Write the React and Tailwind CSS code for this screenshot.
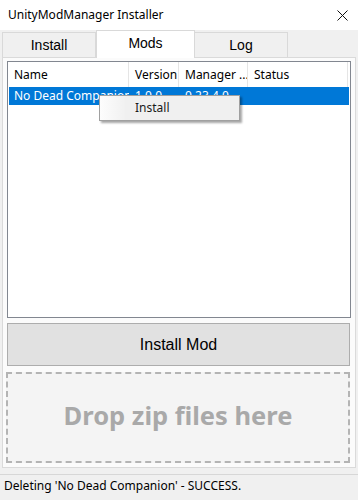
export default function App() {
  const ui = { fontFamily: '"Noto Sans", "Noto Sans CJK KR", sans-serif' }
  const arial = { fontFamily: '"Liberation Sans", Arial, sans-serif' }

  return (
    <div className="w-[358px] h-[500px] bg-[#f0f0f0] flex flex-col overflow-hidden text-black" style={ui}>
      {/* title bar */}
      <div className="h-[30px] bg-white flex items-center justify-between pl-2 pr-[10px] shrink-0">
        <span className="text-[12px] leading-none">UnityModManager Installer</span>
        <svg width="11" height="11" viewBox="0 0 11 11">
          <path d="M0.5 0.5 L10.5 10.5 M10.5 0.5 L0.5 10.5" stroke="#111" strokeWidth="1" />
        </svg>
      </div>

      {/* tabs */}
      <div className="flex items-end pl-[2px] h-[27px] shrink-0 relative z-10" style={arial}>
        <div className="w-[94px] h-[25px] border border-[#d9d9d9] border-b-0 bg-[#f0f0f0] flex items-center justify-center text-[14px]">Install</div>
        <div className="w-[99px] h-[28px] -mb-[1px] border border-[#d9d9d9] border-b-0 bg-white flex items-center justify-center text-[14px] pb-[3px]">Mods</div>
        <div className="w-[93px] h-[25px] border border-[#d9d9d9] border-b-0 border-l-0 bg-[#f0f0f0] flex items-center justify-center text-[14px]">Log</div>
      </div>

      {/* tab page */}
      <div className="mx-[2px] h-[411px] border border-[#dadada] bg-[#fbfbfb] flex flex-col px-[4px] pt-[3px] shrink-0">
        {/* list view */}
        <div className="relative h-[257px] border border-[#828790] bg-white">
          <div className="flex h-[25px] text-[12px] items-center whitespace-nowrap">
            <div className="w-[121px] h-full border-r border-[#e5e5e5] flex items-center pl-[6px]">Name</div>
            <div className="w-[50px] h-full border-r border-[#e5e5e5] flex items-center pl-[6px]">Version</div>
            <div className="w-[69px] h-full border-r border-[#e5e5e5] flex items-center pl-[6px] overflow-hidden">Manager ...</div>
            <div className="w-[100px] h-full border-r border-[#e5e5e5] flex items-center pl-[6px]">Status</div>
          </div>
          <div className="mx-[1px] h-[18px] bg-[#0078d7] flex text-[12px] text-white items-center whitespace-nowrap">
            <div className="w-[120px] pl-[5px] overflow-hidden">No Dead Companion</div>
            <div className="w-[50px] pl-[6px]">1.0.0</div>
            <div className="w-[69px] pl-[6px]">0.23.4.0</div>
          </div>

          {/* context menu */}
          <div className="absolute left-[91px] top-[33px] w-[141px] h-[26px] border border-[#a0a0a0] bg-[#f0f0f0] flex shadow-[2px_2px_2px_rgba(0,0,0,0.35)]">
            <div className="w-[25px] h-full bg-gradient-to-r from-[#fdfdfd] to-[#f1f1f1]" />
            <div className="flex items-center pl-[10px] text-[12px] text-[#1a1a1a]">Install</div>
          </div>
        </div>

        {/* install button */}
        <button className="mt-[5px] h-[43px] w-[343px] border border-[#adadad] bg-[#e1e1e1] text-[16px] flex items-center justify-center" style={arial}>
          Install Mod
        </button>

        {/* drop zone */}
        <div className="mt-[6px] h-[91px] w-[344px] -ml-[1px] border-2 border-dashed border-[#b4b4b4] bg-[#f4f4f4] flex items-center justify-center pb-[3px]">
          <span className="text-[25.5px] font-bold text-[#a9a9a9] leading-none">Drop zip files here</span>
        </div>
      </div>

      <div className="flex-1" />

      {/* status bar */}
      <div className="h-[26px] border-t border-[#d7d7d7] flex items-center pl-[4px] pb-[4px] text-[12px] shrink-0">
        Deleting 'No Dead Companion' - SUCCESS.
      </div>
    </div>
  )
}
